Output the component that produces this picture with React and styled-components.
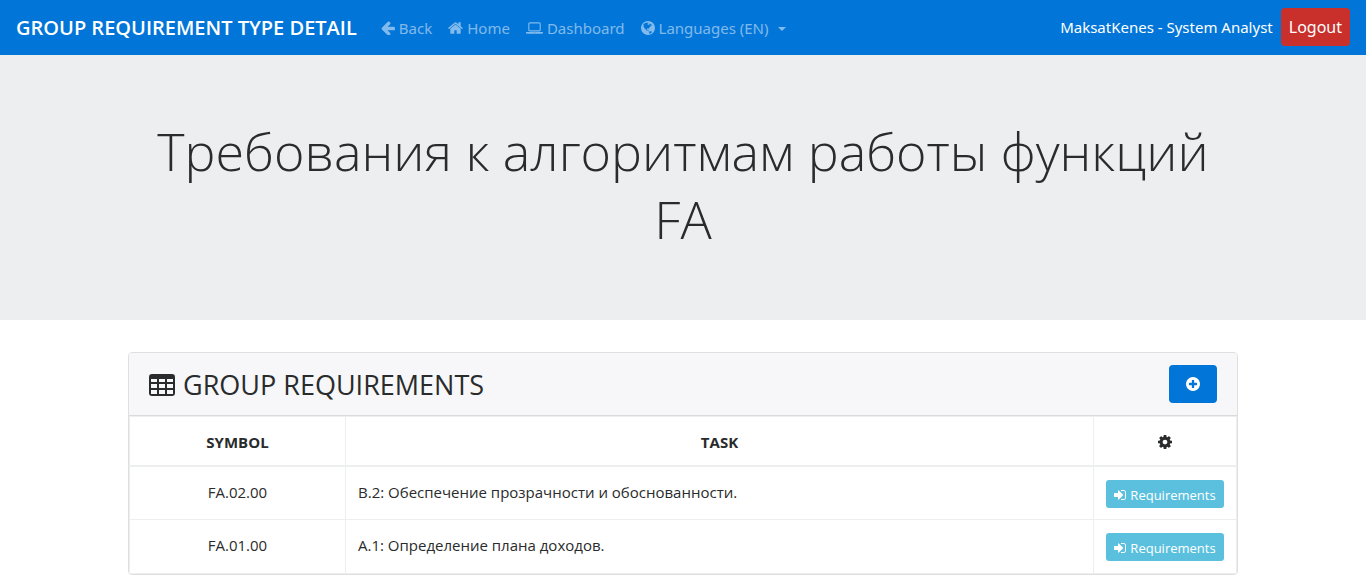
import React from "react";
import styled, { createGlobalStyle } from "styled-components";

const GlobalStyle = createGlobalStyle`
  *, *::before, *::after { box-sizing: border-box; }
  body {
    margin: 0;
    background: #fff;
    color: #292b2c;
    font-family: "Segoe UI", "Open Sans", "Noto Sans", sans-serif;
    font-size: 15px;
    line-height: 24px;
  }
  button { font-family: inherit; cursor: pointer; }
`;

const ICONS = {
  arrowLeft: {
    box: "128 128 1536 1536",
    d: "M1664 896v128q0 53-32.5 90.5t-84.5 37.5h-704l293 294q38 36 38 90t-38 90l-75 76q-37 37-90 37-52 0-91-37l-651-652q-37-37-37-90 0-52 37-91l651-650q38-38 91-38 52 0 90 38l75 74q38 38 38 91t-38 91l-293 293h704q52 0 84.5 37.5t32.5 90.5z",
  },
  home: {
    box: "64 128 1664 1536",
    d: "M1472 992v480q0 26-19 45t-45 19h-384v-384h-256v384h-384q-26 0-45-19t-19-45v-480q0-1 .5-3t.5-3l575-474 575 474q1 2 1 6zm223-69l-62 74q-8 9-21 11h-3q-13 0-21-7l-692-577-692 577q-12 8-24 7-13-2-21-11l-62-74q-8-10-7-23.5t11-21.5l719-599q32-26 76-26t76 26l244 204v-195q0-14 9-23t23-9h192q14 0 23 9t9 23v408l219 182q10 8 11 21.5t-7 23.5z",
  },
  laptop: {
    box: "0 128 1920 1536",
    d: "M416 1280q-66 0-113-47t-47-113v-704q0-66 47-113t113-47h1088q66 0 113 47t47 113v704q0 66-47 113t-113 47h-1088zm-32-864v704q0 13 9.500 22.500t22.500 9.500h1088q13 0 22.500-9.500t9.500-22.500v-704q0-13-9.500-22.500t-22.500-9.500h-1088q-13 0-22.500 9.500t-9.500 22.500zm1376 928h160v96q0 40-47 68t-113 28h-1600q-66 0-113-28t-47-68v-96h1760zm-720 96q16 0 16-16t-16-16h-160q-16 0-16 16t16 16h160z",
  },
  globe: {
    box: "128 128 1536 1536",
    d: "M896 128q209 0 385.5 103t279.5 279.5 103 385.5-103 385.5-279.5 279.5-385.5 103-385.5-103-279.5-279.5-103-385.5 103-385.5 279.5-279.5 385.5-103zm274 521q-2 1-9.5 9.5t-13.5 9.5q2 0 4.5-5t5-11 3.5-7q6-7 22-15 14-6 52-12 34-8 51 11-2-2 9.5-13t14.5-12q3-2 15-4.500t15-7.500l2-22q-12 1-17.5-7t-6.5-21q0 2-6 8 0-7-4.5-8t-11.5 1-9 1q-10-3-15-7.500t-8-16.500-4-15q-2-5-9.500-11t-9.500-10q-1-2-2.500-5.500t-3-6.500-4-5.500-5.500-2.500-7 5-7.500 10-4.500 5q-3-2-6-1.500t-4.500 1-4.500 3-5 3.500q-3 2-8.500 3t-8.500 2q15-5-1-11-10-4-16-3 9-4 7.500-12t-8.500-14h5q-1-4-8.500-8.500t-17.500-8.500-13-6q-8-5-34-9.500t-33-.5q-5 6-4.500 10.500t4 14 3.500 12.500q1 6-5.500 13t-6.500 12q0 7 14 15.500t10 21.500q-3 8-16 16t-16 12q-5 8-1.500 18.500t10.500 16.500q2 2 1.500 4t-3.500 4.500-5.500 4-6.500 3.500l-3 2q-11 5-20.500-6t-13.500-26q-7-25-16-30-23-8-29 1-5-13-41-26-25-9-58-4 6-1 0-15-7-15-19-12 3-6 4-17.500t1-13.500q3-13 12-23 1-1 7-8.500t9.500-13.500.5-6q35 4 50-11 5-5 11.500-17t10.500-17q9-6 14-5.500t14.500 5.500 14.500 5q14 1 15.500-11t-7.500-20q12 1 3-17-4-7-8-9-12-4-27 5-8 4 2 8-1-1-9.500 10.500t-16.500 17.500-16-5q-1-1-5.500-13.500t-9.500-13.500q-8 0-16 15 3-8-11-15t-24-8q19-12-8-27-7-4-20.500-5t-19.500 4q-5 7-5.500 11.500t5 8 10.500 5.500 11.500 4 8.500 3q14 10 8 14-2 1-8.500 3.500t-11.500 4.500-6 4q-3 4 0 14t-2 14q-5-5-9-17.500t-7-16.500q7 9-25 6l-10-1q-4 0-16 2t-20.500 1-13.500-8q-4-8 0-20 1-4 4-2-4-3-11-9.500t-10-8.500q-46 15-94 41 6 1 12-1 5-2 13-6.500t10-5.500q34-14 42-7l5-5q14 16 20 25-7-4-30-1-20 6-22 12 7 12 5 18-4-3-11.500-10t-14.500-11-15-5q-16 0-22 1-146 80-235 222 7 7 12 8 4 1 5 9t2.500 11 11.500-3q9 8 3 19 1-1 44 27 19 17 21 21 3 11-10 18-1-2-9-9t-9-4q-3 5 .5 18.500t10.500 12.500q-7 0-9.500 16t-2.500 35.500-1 23.500l2 1q-3 12 5.500 34.500t21.500 19.500q-13 3 20 43 6 8 8 9 3 2 12 7.500t15 10 10 10.500q4 5 10 22.500t14 23.500q-2 6 9.500 20t10.500 23q-1 0-2.500 1t-2.500 1q3 7 15.500 14t15.500 13q1 3 2 10t3 11 8 2q2-20-24-62-15-25-17-29-3-5-5.500-15.500t-4.500-14.500q2 0 6 1.500t8.500 3.500 7.500 4 2 3q-3 7 2 17.500t12 18.500 17 19 12 13q6 6 14 19.500t0 13.500q9 0 20 10.500t17 19.500q5 8 8 26t5 24q2 7 8.500 13.500t12.500 9.500l16 8 13 7q5 2 18.500 10.500t21.500 11.500q10 4 16 4t14.500-2.500 13.500-3.500q15-2 29 15t21 21q36 19 55 11-2 1 .5 7.500t8 15.500 9 14.500 5.500 8.500q5 6 18 15t18 15q6-4 7-9-3 8 7 20t18 10q14-3 14-32-31 15-49-18 0-1-2.500-5.500t-4-8.500-2.500-8.500 0-7.500 5-3q9 0 10-3.500t-2-12.500-4-13q-1-8-11-20t-12-15q-5 9-16 8t-16-9q0 1-1.500 5.500t-1.500 6.500q-13 0-15-1 1-3 2.500-17.500t3.500-22.500q1-4 5.500-12t7.500-14.500 4-12.500-4.500-9.500-17.500-2.500q-19 1-26 20-1 3-3 10.500t-5 11.500-9 7q-7 3-24 2t-24-5q-13-8-22.500-29t-9.500-37q0-10 2.500-26.500t3-25-5.500-24.500q3-2 9-9.500t10-10.500q2-1 4.500-1.500t4.500 0 4-1.500 3-6q-1-1-4-3-3-3-4-3 7 3 28.500-1.500t27.500 1.500q15 11 22-2 0-1-2.500-9.500t-.5-13.500q5 27 29 9 3 3 15.500 5t17.500 5q3 2 7 5.500t5.500 4.500 5-.5 8.500-6.500q10 14 12 24 11 40 19 44 7 3 11 2t4.500-9.500 0-14-1.500-12.500l-1-8v-18l-1-8q-15-3-18.500-12t1.500-18.500 15-18.500q1-1 8-3.500t15.500-6.500 12.500-8q21-19 15-35 7 0 11-9-1 0-5-3t-7.500-5-4.500-2q9-5 2-16 5-3 7.500-11t7.500-10q9 12 21 2 8-8 1-16 5-7 20.500-10.500t18.500-9.500q7 2 8-2t1-12 3-12q4-5 15-9t13-5l17-11q3-4 0-4 18 2 31-11 10-11-6-20 3-6-3-9.500t-15-5.500q3-1 11.500-.5t10.500-1.500q15-10-7-16-17-5-43 12zm-163 877q206-36 351-189-3-3-12.500-4.500t-12.500-3.500q-18-7-24-8 1-7-2.500-13t-8-9-12.500-8-11-7q-2-2-7-6t-7-5.500-7.500-4.500-8.500-2-10 1l-3 1q-3 1-5.500 2.500t-5.500 3-4 3 0 2.500q-21-17-36-22-5-1-11-5.500t-10.500-7-10-1.500-11.500 7q-5 5-6 15t-2 13q-7-5 0-17.500t2-18.500q-3-6-10.500-4.500t-12 4.500-11.500 8.500-9 6.500-8.500 5.500-8.500 7.500q-3 4-6 12t-5 11q-2-4-11.500-6.500t-9.500-5.500q2 10 4 35t5 38q7 31-12 48-27 25-29 40-4 22 12 26 0 7-8 20.500t-7 21.500q0 6 2 16z",
  },
  table: {
    box: "0 0 26 22",
    d: "M3 0h20a3 3 0 0 1 3 3v16a3 3 0 0 1-3 3H3a3 3 0 0 1-3-3V3a3 3 0 0 1 3-3zM2 5v3h6V5zM10 5v3h6V5zM18 5v3h6V5zM2 10v4h6v-4zM10 10v4h6v-4zM18 10v4h6v-4zM2 16v4h6v-4zM10 16v4h6v-4zM18 16v4h6v-4z",
  },
  plusCircle: {
    box: "128 128 1536 1536",
    d: "M1344 960v-128q0-26-19-45t-45-19h-256v-256q0-26-19-45t-45-19h-128q-26 0-45 19t-19 45v256h-256q-26 0-45 19t-19 45v128q0 26 19 45t45 19h256v256q0 26 19 45t45 19h128q26 0 45-19t19-45v-256h256q26 0 45-19t19-45zm320-64q0 209-103 385.5t-279.5 279.5-385.5 103-385.5-103-279.5-279.5-103-385.5 103-385.5 279.5-279.5 385.5-103 385.5 103 279.5 279.5 103 385.5z",
  },
  cog: {
    box: "128 128 1536 1536",
    d: "M1152 896q0-106-75-181t-181-75-181 75-75 181 75 181 181 75 181-75 75-181zm512-109v222q0 12-8 23t-20 13l-185 28q-19 54-39 91 35 50 107 138 10 12 10 25t-9 23q-27 37-99 108t-94 71q-12 0-26-9l-138-108q-44 23-91 38-16 136-29 186-7 28-36 28h-222q-14 0-24.5-8.5t-11.5-21.5l-28-184q-49-16-90-37l-141 107q-10 9-25 9-14 0-25-11-126-114-165-168-7-10-7-23 0-12 8-23 15-21 51-66.5t54-70.5q-27-50-41-99l-183-27q-13-2-21-12.5t-8-23.5v-222q0-12 8-23t19-13l186-28q14-46 39-92-40-57-107-138-10-12-10-24 0-10 9-23 26-36 98.5-107.5t94.5-71.5q13 0 26 10l138 107q44-23 91-38 16-136 29-186 7-28 36-28h222q14 0 24.5 8.5t11.5 21.5l28 184q49 16 90 37l142-107q9-9 24-9 13 0 25 10 129 119 165 170 7 8 7 22 0 12-8 23-15 21-51 66.5t-54 70.5q26 50 41 98l183 28q13 2 21 12.5t8 23.5z",
  },
  signIn: {
    box: "128 128 1536 1536",
    d: "M1312 896q0 26-19 45l-544 544q-19 19-45 19t-45-19-19-45v-288h-448q-26 0-45-19t-19-45v-384q0-26 19-45t45-19h448v-288q0-26 19-45t45-19 45 19l544 544q19 19 19 45zm352-352v704q0 119-84.5 203.5t-203.5 84.5h-320q-13 0-22.5-9.5t-9.5-22.5q0-4-1-20t-.5-26.5 3-23.5 10-19.5 20.5-6.5h320q66 0 113-47t47-113v-704q0-66-47-113t-113-47h-312l-11.5-1-11.5-3-8-5.5-7-9-2-13.5q0-4-1-20t-.5-26.5 3-23.5 10-19.5 20.5-6.5h320q119 0 203.5 84.5t84.5 203.5z",
  },
};

const Svg = styled.svg`
  display: block;
  flex: none;
  fill: currentColor;
`;

function Icon({ name, width = 14, height = 14 }) {
  const icon = ICONS[name];
  return (
    <Svg width={width} height={height} viewBox={icon.box} aria-hidden="true">
      <path fillRule="evenodd" d={icon.d} />
    </Svg>
  );
}

const Navbar = styled.nav`
  display: flex;
  align-items: flex-start;
  justify-content: space-between;
  padding: 8px 16px 7px;
  background: #0275d8;
  font-family: "Segoe UI", "Noto Sans", sans-serif;
`;

const NavGroup = styled.div`
  display: flex;
  align-items: center;
`;

const Brand = styled.a`
  margin-right: 24px;
  color: #fff;
  font-family: "Segoe UI", "Open Sans", sans-serif;
  font-size: 20px;
  font-weight: 600;
  line-height: 40px;
  text-decoration: none;
  white-space: nowrap;
`;

const NavLinks = styled.div`
  display: flex;
  gap: 16px;
`;

const NavLink = styled.a`
  display: flex;
  align-items: center;
  gap: 4px;
  color: rgba(255, 255, 255, 0.5);
  line-height: 40px;
  text-decoration: none;
  white-space: nowrap;
`;

const Caret = styled.span`
  margin: 2px 0 0 5px;
  border: 4px solid transparent;
  border-top-color: currentColor;
  border-bottom: 0;
`;

const UserName = styled.span`
  margin-right: 8px;
  color: #fff;
  line-height: 38px;
  white-space: nowrap;
`;

const LogoutButton = styled.button`
  height: 38px;
  padding: 0 8px;
  border: 0;
  border-radius: 4px;
  background: #c9302c;
  color: #fff;
  font-size: 16px;
`;

const Hero = styled.header`
  padding: 62px 32px 67px;
  background: #eceeef;
  text-align: center;
`;

const Container = styled.div`
  max-width: 1140px;
  margin: 0 auto;
  padding: 0 15px;
`;

const HeroTitle = styled.h1`
  margin: 0;
  font-size: 52px;
  font-weight: 300;
  line-height: 68px;
`;

const Main = styled.main`
  padding: 32px 0 10px;
`;

const Card = styled.section`
  overflow: hidden;
  border: 1px solid #dfdfdf;
  border-radius: 4px;
`;

const CardHeader = styled.div`
  display: flex;
  align-items: center;
  justify-content: space-between;
  padding: 12px 20px;
  border-bottom: 1px solid #dadadb;
  background: #f7f7f9;
`;

const CardTitle = styled.h2`
  display: flex;
  align-items: center;
  gap: 8px;
  margin: 0;
  padding-top: 2px;
  font-size: 27px;
  font-weight: 400;
  line-height: 36px;
`;

const AddButton = styled.button`
  display: flex;
  align-items: center;
  justify-content: center;
  width: 48px;
  height: 38px;
  padding: 0;
  border: 0;
  border-radius: 4px;
  background: #0275d8;
  color: #fff;
`;

const Table = styled.table`
  width: 100%;
  border-collapse: collapse;
`;

const HeadCell = styled.th`
  width: ${(p) => p.$width || "auto"};
  height: 49px;
  padding: 2px 12px 0;
  border: 1px solid #eceeef;
  border-bottom-width: 2px;
  font-size: 15px;
  font-weight: 700;
`;

const HeadIcon = styled.span`
  display: flex;
  justify-content: center;
`;

const Cell = styled.td`
  height: 54px;
  padding: 13px 12px 0;
  border: 1px solid #eceeef;
  text-align: ${(p) => p.$align || "left"};
  vertical-align: top;
`;

const RowButton = styled.button`
  display: flex;
  align-items: center;
  justify-content: center;
  gap: 4px;
  width: 100%;
  height: 28px;
  padding: 2px 0 0;
  border: 0;
  border-radius: 3px;
  background: #5bc0de;
  color: #fff;
  font-size: 13px;
`;

const ROWS = [
  { symbol: "FA.02.00", task: "B.2: Обеспечение прозрачности и обоснованности." },
  { symbol: "FA.01.00", task: "A.1: Определение плана доходов." },
];

export default function App() {
  return (
    <>
      <GlobalStyle />
      <Navbar>
        <NavGroup>
          <Brand href="#">GROUP REQUIREMENT TYPE DETAIL</Brand>
          <NavLinks>
            <NavLink href="#"><Icon name="arrowLeft" />Back</NavLink>
            <NavLink href="#"><Icon name="home" width={15} />Home</NavLink>
            <NavLink href="#"><Icon name="laptop" width={17} />Dashboard</NavLink>
            <NavLink href="#"><Icon name="globe" />Languages (EN)<Caret /></NavLink>
          </NavLinks>
        </NavGroup>
        <NavGroup>
          <UserName>MaksatKenes - System Analyst</UserName>
          <LogoutButton type="button">Logout</LogoutButton>
        </NavGroup>
      </Navbar>
      <Hero>
        <Container>
          <HeroTitle>Требования к алгоритмам работы функций FA</HeroTitle>
        </Container>
      </Hero>
      <Main>
        <Container>
          <Card>
            <CardHeader>
              <CardTitle><Icon name="table" width={26} height={22} />GROUP REQUIREMENTS</CardTitle>
              <AddButton type="button" aria-label="Add"><Icon name="plusCircle" /></AddButton>
            </CardHeader>
            <Table>
              <thead>
                <tr>
                  <HeadCell $width="216px">SYMBOL</HeadCell>
                  <HeadCell>TASK</HeadCell>
                  <HeadCell $width="143px" aria-label="Actions">
                    <HeadIcon><Icon name="cog" /></HeadIcon>
                  </HeadCell>
                </tr>
              </thead>
              <tbody>
                {ROWS.map((row) => (
                  <tr key={row.symbol}>
                    <Cell $align="center">{row.symbol}</Cell>
                    <Cell>{row.task}</Cell>
                    <Cell>
                      <RowButton type="button"><Icon name="signIn" width={12} height={12} />Requirements</RowButton>
                    </Cell>
                  </tr>
                ))}
              </tbody>
            </Table>
          </Card>
        </Container>
      </Main>
    </>
  );
}
